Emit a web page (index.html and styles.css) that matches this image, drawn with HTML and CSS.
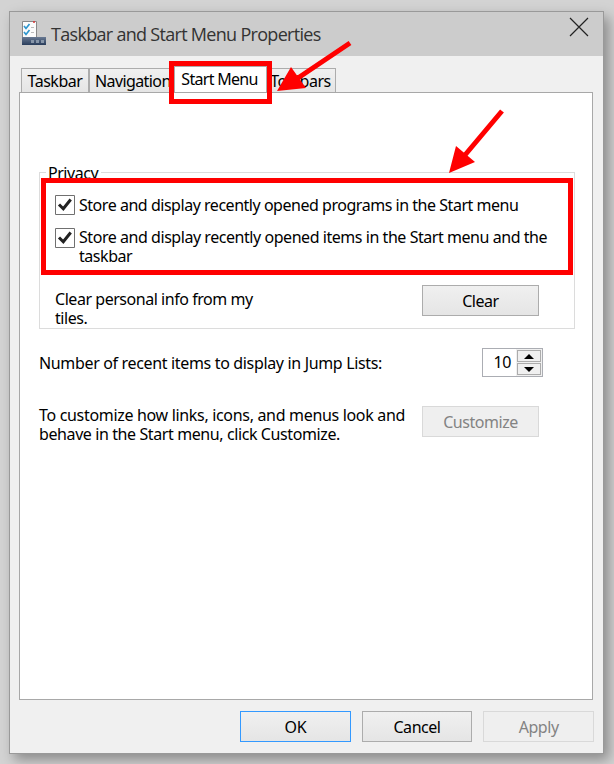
FILE: index.html
```html
<!DOCTYPE html>
<html lang="en">
<head>
<meta charset="utf-8">
<title>Taskbar and Start Menu Properties</title>
<link rel="stylesheet" href="styles.css">
</head>
<body>
<main class="window">
  <header class="titlebar">
    <svg class="app-icon" width="24" height="24" viewBox="0 0 24 24">
      <defs><linearGradient id="bar" x1="0" y1="0" x2="0" y2="1"><stop offset="0" stop-color="#687992"/><stop offset="1" stop-color="#293d5b"/></linearGradient></defs>
      <path d="M.5 16V.5h14V16" fill="#fbfbfb" stroke="#888"/>
      <path d="M11 1h2" stroke="#d33" stroke-width="1.5"/>
      <path d="M2 5l2 2.5L7.500 3M2 11l2 2.500L7.500 9" fill="none" stroke="#2d96ce" stroke-width="1.700"/>
      <path d="M9 6.500h3M9 11.500h3" stroke="#bbb"/>
      <path d="M0 16h24v8H0z" fill="url(#bar)"/>
      <path d="M9 19h3v3H9zM14 19h3v3h-3zM19 19h3v3h-3z" fill="#8796a9"/>
    </svg>
    <h1>Taskbar and Start Menu Properties</h1>
    <svg class="close" width="20" height="20" viewBox="0 0 20 20"><path d="M1 1l18 18M19 1L1 19" stroke="#222" stroke-width="1.200"/></svg>
  </header>
  <nav class="tabs">
    <div class="tab taskbar">Taskbar</div>
    <div class="tab navigation">Navigation</div>
    <div class="tab active">Start Menu</div>
    <div class="tab toolbars">Toolbars</div>
  </nav>
  <section class="page">
    <div class="group">
      <span class="legend">Privacy</span>
      <div class="check">
        <svg width="20" height="20" viewBox="0 0 20 20"><path d="M.5.5h19v19H.5z" fill="#fff" stroke="#707070"/><path d="M4 9.500l4.300 4.300L15.700 4.500" fill="none" stroke="#222" stroke-width="3"/></svg>
        <p>Store and display recently opened programs in the Start menu</p>
      </div>
      <div class="check">
        <svg width="20" height="20" viewBox="0 0 20 20"><path d="M.5.5h19v19H.5z" fill="#fff" stroke="#707070"/><path d="M4 9.500l4.300 4.300L15.700 4.500" fill="none" stroke="#222" stroke-width="3"/></svg>
        <p>Store and display recently opened items in the Start menu and the<br>taskbar</p>
      </div>
      <div class="clear-row"><p>Clear personal info from my<br>tiles.</p><div class="button">Clear</div></div>
    </div>
    <div class="jump-row">
      <p>Number of recent items to display in Jump Lists:</p>
      <div class="spinner"><span>10</span>
        <div class="steps">
          <i><svg width="10" height="5"><path d="M0 5l5-5 5 5z"/></svg></i>
          <i><svg width="10" height="5"><path d="M0 0l5 5 5-5z"/></svg></i>
        </div>
      </div>
    </div>
    <div class="custom-row"><p>To customize how links, icons, and menus look and<br><span>behave in the Start menu, click Customize.</span></p><div class="button disabled">Customize</div></div>
  </section>
  <footer>
    <div class="button primary">OK</div>
    <div class="button">Cancel</div>
    <div class="button disabled">Apply</div>
  </footer>
</main>
<svg class="marks" width="614" height="764" viewBox="0 0 614 764">
  <g fill="none" stroke="#f00" stroke-width="5"><path d="M171.500 63.500h98v38h-98zM43.500 180.500H570.500v92H43.500z"/><path d="M350 43L295 80M502 111L465 155"/></g>
  <path d="M277 91l14-24 15 21zM449 173l7-27 19 16z" fill="#f00"/>
</svg>
</body>
</html>
```

FILE: styles.css
```css
* { box-sizing: border-box; }
body {
  margin: 0; width: 614px; height: 764px; padding: 11px 10px 10px 9px;
  background: #d3d3d3; overflow: hidden;
  font: 16px/19px "Noto Sans", sans-serif; letter-spacing: -.46px; color: #000;
}
p, h1 { margin: 0; white-space: nowrap; }
svg { display: block; flex: none; }
.window {
  width: 595px; height: 743px; border: 1px solid #999; background: #f0f0f0;
  box-shadow: 5px 6px 12px rgba(0, 0, 0, .34);
}
.titlebar { height: 44px; background: #ccc; display: flex; align-items: flex-start; padding: 9px 14px 0 12px; }
h1 { font: 18px/26px "Open Sans", sans-serif; letter-spacing: -.7px; color: #333; margin-left: 5px; }
.close { margin: -4px 0 0 auto; }
.tabs { display: flex; align-items: flex-end; height: 36px; padding-left: 11px; }
.tab {
  height: 24px; border: 1px solid #acacac; border-bottom: 0; line-height: 24px;
  text-align: center; white-space: nowrap; background: linear-gradient(#f0f0f0, #e5e5e5);
}
.taskbar { width: 68px; }
.navigation { width: 88px; margin-left: 0; padding-left: 5px; letter-spacing: -.6px; text-align: left; }
.active { width: 93px; height: 26px; margin-left: -3px; padding-right: 2px; letter-spacing: -.7px; background: #fff; z-index: 1; }
.toolbars { width: 71px; margin-left: -2px; }
.page { height: 608px; margin: 0 10px 0 9px; border: 1px solid #a8a8a8; background: #fff; padding: 79px 17px 0 19px; }
.group { border: 1px solid #dcdcdc; width: 536px; height: 157px; padding: 22px 35px 0 15px; }
.legend { display: block; width: 55px; height: 19px; margin: -31px 0 12px -9px; padding-left: 2px; background: #fff; }
.check { display: flex; gap: 4px; height: 33px; }
.check + .check { height: 62px; }
.check p { margin-top: 1px; letter-spacing: -.47px; }
.check + .check p { margin-top: 0; letter-spacing: -.45px; }
.clear-row, .jump-row, .custom-row { display: flex; justify-content: space-between; }
.button {
  width: 117px; height: 31px; border: 1px solid #acacac;
  background: linear-gradient(#f0f0f0, #e5e5e5); text-align: center; line-height: 31px;
}
.clear-row .button { margin-top: -5px; }
.button.disabled { color: #838383; border-color: #d9d9d9; background: #efefef; }
.jump-row { margin-top: 19px; padding-right: 32px; height: 58px; }
.jump-row p { margin-top: 6px; letter-spacing: -.34px; }
.spinner { width: 61px; height: 29px; border: 1px solid #abadb3; display: flex; justify-content: flex-end; }
.spinner span { padding-top: 4px; margin-right: 5px; }
.steps { display: flex; flex-direction: column; gap: 1px; padding: 1px; background: #f0f0f0; }
.steps i { width: 24px; height: 12px; border: 1px solid #acacac; display: flex; justify-content: center; align-items: center; }
.custom-row p { letter-spacing: -.32px; }
.custom-row span { letter-spacing: -.4px; }
.custom-row .button { margin-right: 36px; }
footer { display: flex; padding: 11px 9px 0 230px; gap: 11px; }
footer .button { width: 111px; }
.button.primary { border-color: #3399ff; }
.marks { position: absolute; left: 0; top: 0; }
```
